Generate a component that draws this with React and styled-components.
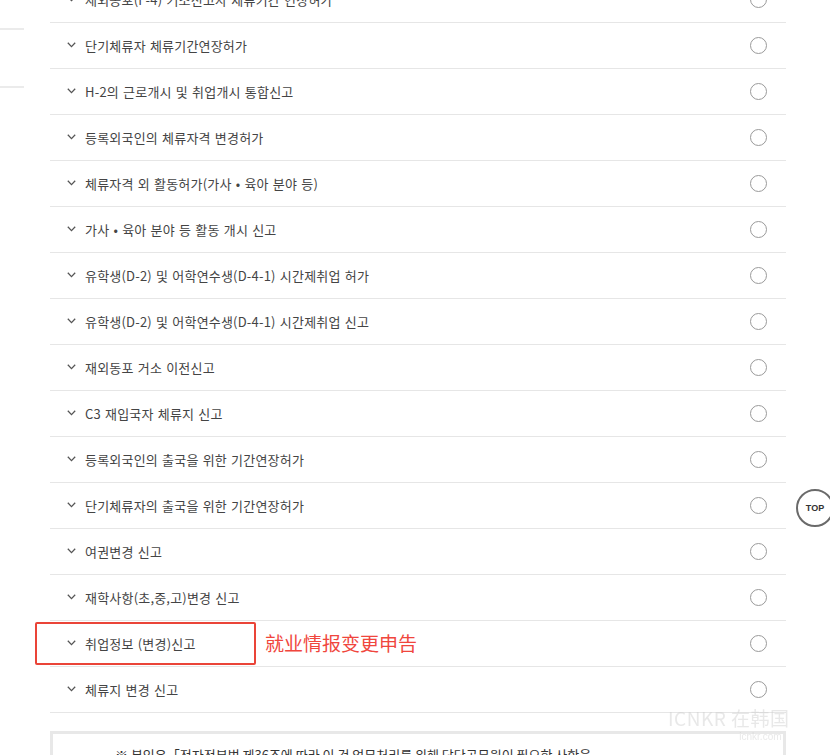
import React from "react";
import styled, { createGlobalStyle } from "styled-components";

const items = [
  "재외동포(F-4) 거소신고자 체류기간 연장허가",
  "단기체류자 체류기간연장허가",
  "H-2의 근로개시 및 취업개시 통합신고",
  "등록외국인의 체류자격 변경허가",
  "체류자격 외 활동허가(가사 • 육아 분야 등)",
  "가사 • 육아 분야 등 활동 개시 신고",
  "유학생(D-2) 및 어학연수생(D-4-1) 시간제취업 허가",
  "유학생(D-2) 및 어학연수생(D-4-1) 시간제취업 신고",
  "재외동포 거소 이전신고",
  "C3 재입국자 체류지 신고",
  "등록외국인의 출국을 위한 기간연장허가",
  "단기체류자의 출국을 위한 기간연장허가",
  "여권변경 신고",
  "재학사항(초,중,고)변경 신고",
  { label: "취업정보 (변경)신고", note: "就业情报变更申告" },
  "체류지 변경 신고",
];

export default function App() {
  return (
    <>
      <GlobalStyle />
      <Page>
        <Sidebar>
          <SideItem $h={28} />
          <SideItem $h={56} />
        </Sidebar>
        <Content>
          <List>
            {items.map((item, index) => {
              const label = typeof item === "string" ? item : item.label;
              const note = typeof item === "string" ? null : item.note;
              return (
                <Row key={index}>
                  {note && <Highlight />}
                  <Chevron width="9" height="6" viewBox="0 0 9 6">
                    <polyline
                      points="0.8,0.8 4.5,4.6 8.2,0.8"
                      fill="none"
                      stroke="#555"
                      strokeWidth="1.3"
                    />
                  </Chevron>
                  <Label>{label}</Label>
                  {note && <Note>{note}</Note>}
                  <Radio />
                </Row>
              );
            })}
          </List>
          <Notice>
            ※ 본인은「전자정부법 제36조에 따라 이 건 업무처리를 위해 담당공무원이 필요한 사항을
          </Notice>
        </Content>
      </Page>
      <Watermark>
        <WmBig>ICNKR 在韩国</WmBig>
        <WmSmall>icnkr.com</WmSmall>
      </Watermark>
      <TopButton>TOP</TopButton>
    </>
  );
}

const GlobalStyle = createGlobalStyle`
  html, body {
    margin: 0;
    padding: 0;
    background: #fff;
    overflow: hidden;
  }
  body {
    font-family: "Noto Sans CJK KR", "Noto Sans", sans-serif;
    color: #444;
  }
`;

const Page = styled.div`
  display: flex;
  width: 830px;
  height: 755px;
  overflow: hidden;
`;

const Sidebar = styled.div`
  width: 24px;
  display: flex;
  flex-direction: column;
`;

const SideItem = styled.div`
  height: ${(p) => p.$h}px;
  border-bottom: 2px solid #ebebeb;
`;

const Content = styled.div`
  margin-left: 26px;
  width: 736px;
  margin-top: -23px;
`;

const List = styled.div`
  display: flex;
  flex-direction: column;
`;

const Row = styled.div`
  position: relative;
  height: 45px;
  display: flex;
  align-items: center;
  padding: 0 19px 1px 17px;
  box-sizing: border-box;
  height: 46px;
  border-bottom: 1px solid #e6e6e6;
`;

const Chevron = styled.svg`
  flex: none;
  margin-right: 9px;
`;

const Label = styled.span`
  font-size: 13px;
  color: #444;
  letter-spacing: 0.2px;
  word-spacing: 1px;
`;

const Note = styled.span`
  position: absolute;
  left: 215px;
  top: 50%;
  transform: translateY(-54%);
  font-family: "Noto Sans CJK SC", sans-serif;
  font-size: 19px;
  color: #f0463d;
`;

const Highlight = styled.div`
  position: absolute;
  left: -15px;
  top: 1px;
  width: 217px;
  height: 39px;
  border: 2px solid #ea4438;
  border-radius: 2px;
`;

const Radio = styled.span`
  margin-left: auto;
  width: 15px;
  height: 15px;
  border-radius: 50%;
  border: 1.5px solid #9a9a9a;
`;

const Notice = styled.div`
  margin-top: 18px;
  border: 3px solid #e8e8e8;
  padding: 11px 60px 20px 62px;
  font-size: 13px;
  color: #333;
  white-space: nowrap;
`;

const Watermark = styled.div`
  position: fixed;
  left: 668px;
  top: 707px;
  display: flex;
  flex-direction: column;
  align-items: flex-end;
  gap: 2px;
  color: rgba(205, 205, 205, 0.45);
  pointer-events: none;
`;

const WmBig = styled.div`
  font-family: "Noto Sans CJK SC", sans-serif;
  font-size: 19px;
  line-height: 22px;
  font-weight: 400;
  letter-spacing: 0.5px;
`;

const WmSmall = styled.div`
  font-family: "Liberation Sans", sans-serif;
  font-size: 10px;
  line-height: 12px;
  margin-right: 8px;
`;

const TopButton = styled.div`
  position: fixed;
  left: 796px;
  top: 489px;
  width: 34px;
  height: 34px;
  border-radius: 50%;
  border: 2px solid #6a6a6a;
  background: #fff;
  display: flex;
  align-items: center;
  justify-content: center;
  font-family: "Liberation Sans", sans-serif;
  font-size: 9px;
  font-weight: 700;
  color: #333;
`;
